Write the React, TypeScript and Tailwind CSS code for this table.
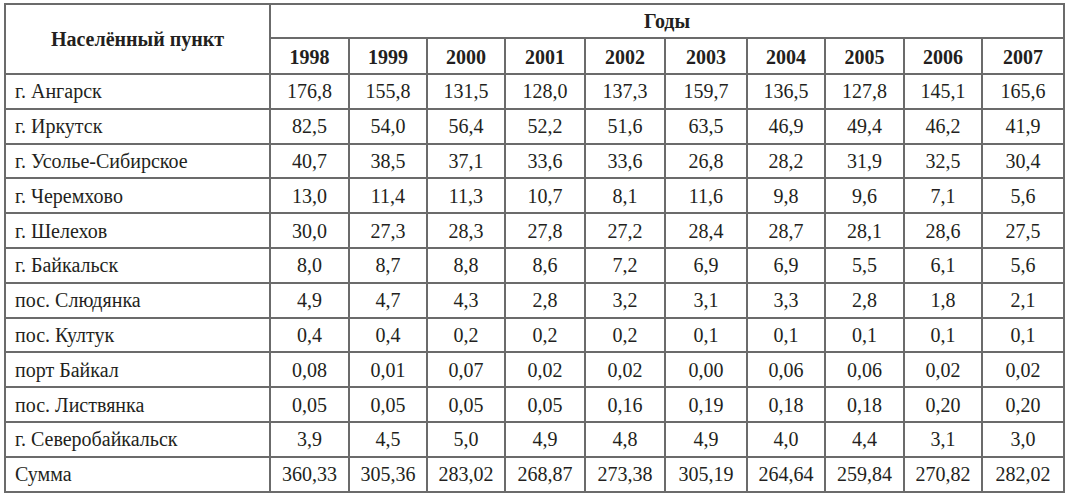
import React from 'react';

const years = ['1998', '1999', '2000', '2001', '2002', '2003', '2004', '2005', '2006', '2007'];
const colWidths = [265, 79, 78, 78, 80, 80, 82, 78, 79, 78, 82];

const rows: [string, string[]][] = [
  ['г. Ангарск', ['176,8', '155,8', '131,5', '128,0', '137,3', '159,7', '136,5', '127,8', '145,1', '165,6']],
  ['г. Иркутск', ['82,5', '54,0', '56,4', '52,2', '51,6', '63,5', '46,9', '49,4', '46,2', '41,9']],
  ['г. Усолье-Сибирское', ['40,7', '38,5', '37,1', '33,6', '33,6', '26,8', '28,2', '31,9', '32,5', '30,4']],
  ['г. Черемхово', ['13,0', '11,4', '11,3', '10,7', '8,1', '11,6', '9,8', '9,6', '7,1', '5,6']],
  ['г. Шелехов', ['30,0', '27,3', '28,3', '27,8', '27,2', '28,4', '28,7', '28,1', '28,6', '27,5']],
  ['г. Байкальск', ['8,0', '8,7', '8,8', '8,6', '7,2', '6,9', '6,9', '5,5', '6,1', '5,6']],
  ['пос. Слюдянка', ['4,9', '4,7', '4,3', '2,8', '3,2', '3,1', '3,3', '2,8', '1,8', '2,1']],
  ['пос. Култук', ['0,4', '0,4', '0,2', '0,2', '0,2', '0,1', '0,1', '0,1', '0,1', '0,1']],
  ['порт Байкал', ['0,08', '0,01', '0,07', '0,02', '0,02', '0,00', '0,06', '0,06', '0,02', '0,02']],
  ['пос. Листвянка', ['0,05', '0,05', '0,05', '0,05', '0,16', '0,19', '0,18', '0,18', '0,20', '0,20']],
  ['г. Северобайкальск', ['3,9', '4,5', '5,0', '4,9', '4,8', '4,9', '4,0', '4,4', '3,1', '3,0']],
  ['Сумма', ['360,33', '305,36', '283,02', '268,87', '273,38', '305,19', '264,64', '259,84', '270,82', '282,02']],
];

const cell = 'border-2 border-[#6b6b6b] p-0';

export default function App() {
  return (
    <div className="min-h-[497px] w-[1071px] bg-white pl-[4px] pt-[3px] text-[#231f20] font-['Liberation_Serif','Times_New_Roman',serif]">
      <table className="table-fixed border-collapse text-[20px] leading-none">
        <colgroup>
          {colWidths.map((w, i) => (
            <col key={i} style={{ width: w }} />
          ))}
        </colgroup>
        <thead>
          <tr className="h-[34px]">
            <th rowSpan={2} className={`${cell} text-[20px] font-bold`}>
              Населённый пункт
            </th>
            <th colSpan={10} className={`${cell} text-[20px] font-bold`}>
              Годы
            </th>
          </tr>
          <tr className="h-[36px]">
            {years.map((y) => (
              <th key={y} className={`${cell} pt-[2px] text-[20px] font-bold`}>
                {y}
              </th>
            ))}
          </tr>
        </thead>
        <tbody>
          {rows.map(([name, vals]) => (
            <tr key={name} className="h-[34.8px]">
              <td className={`${cell} pl-[9px] text-left`}>{name}</td>
              {vals.map((v, i) => (
                <td key={i} className={`${cell} text-center`}>
                  {v}
                </td>
              ))}
            </tr>
          ))}
        </tbody>
      </table>
    </div>
  );
}
